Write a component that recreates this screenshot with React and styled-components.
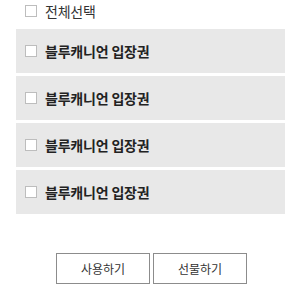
import React from 'react'
import styled, { createGlobalStyle } from 'styled-components'

const GlobalStyle = createGlobalStyle`
  body {
    margin: 0;
    background: #fff;
    font-family: 'Noto Sans CJK KR', 'Noto Sans', sans-serif;
    color: #222;
  }
`

const Page = styled.div`
  width: 300px;
  height: 300px;
  display: flex;
  flex-direction: column;
  padding: 2px 15px 0 16px;
  box-sizing: border-box;
`

const Row = styled.label`
  display: flex;
  align-items: center;
  gap: 8px;
  height: ${props => (props.header ? '17px' : '44px')};
  padding-left: 9px;
  background: ${props => (props.header ? 'transparent' : '#e8e8e8')};
  font-size: 14px;
  font-weight: ${props => (props.header ? 400 : 700)};
  color: ${props => (props.header ? '#333' : '#222')};
  letter-spacing: -0.2px;
`

const List = styled.div`
  display: flex;
  flex-direction: column;
  gap: 3px;
  margin-top: 10px;
`

const Box = styled.span`
  width: 10px;
  height: 10px;
  border: 1px solid #bdbdbd;
  background: #fff;
  flex-shrink: 0;
`

const Buttons = styled.div`
  display: flex;
  justify-content: center;
  gap: 3px;
  margin-top: 39px;
  padding-left: 2px;
`

const Button = styled.button`
  width: 94px;
  height: 31px;
  border: 1px solid #8c8c8c;
  background: #fff;
  font-family: inherit;
  font-size: 12px;
  color: #333;
  padding: 0;
`

const tickets = ['블루캐니언 입장권', '블루캐니언 입장권', '블루캐니언 입장권', '블루캐니언 입장권']

const App = () => {
  return (
    <Page>
      <GlobalStyle />
      <Row header>
        <Box />
        전체선택
      </Row>
      <List>
        {tickets.map((name, i) => (
          <Row key={i}>
            <Box />
            {name}
          </Row>
        ))}
      </List>
      <Buttons>
        <Button>사용하기</Button>
        <Button>선물하기</Button>
      </Buttons>
    </Page>
  )
}

export default App
